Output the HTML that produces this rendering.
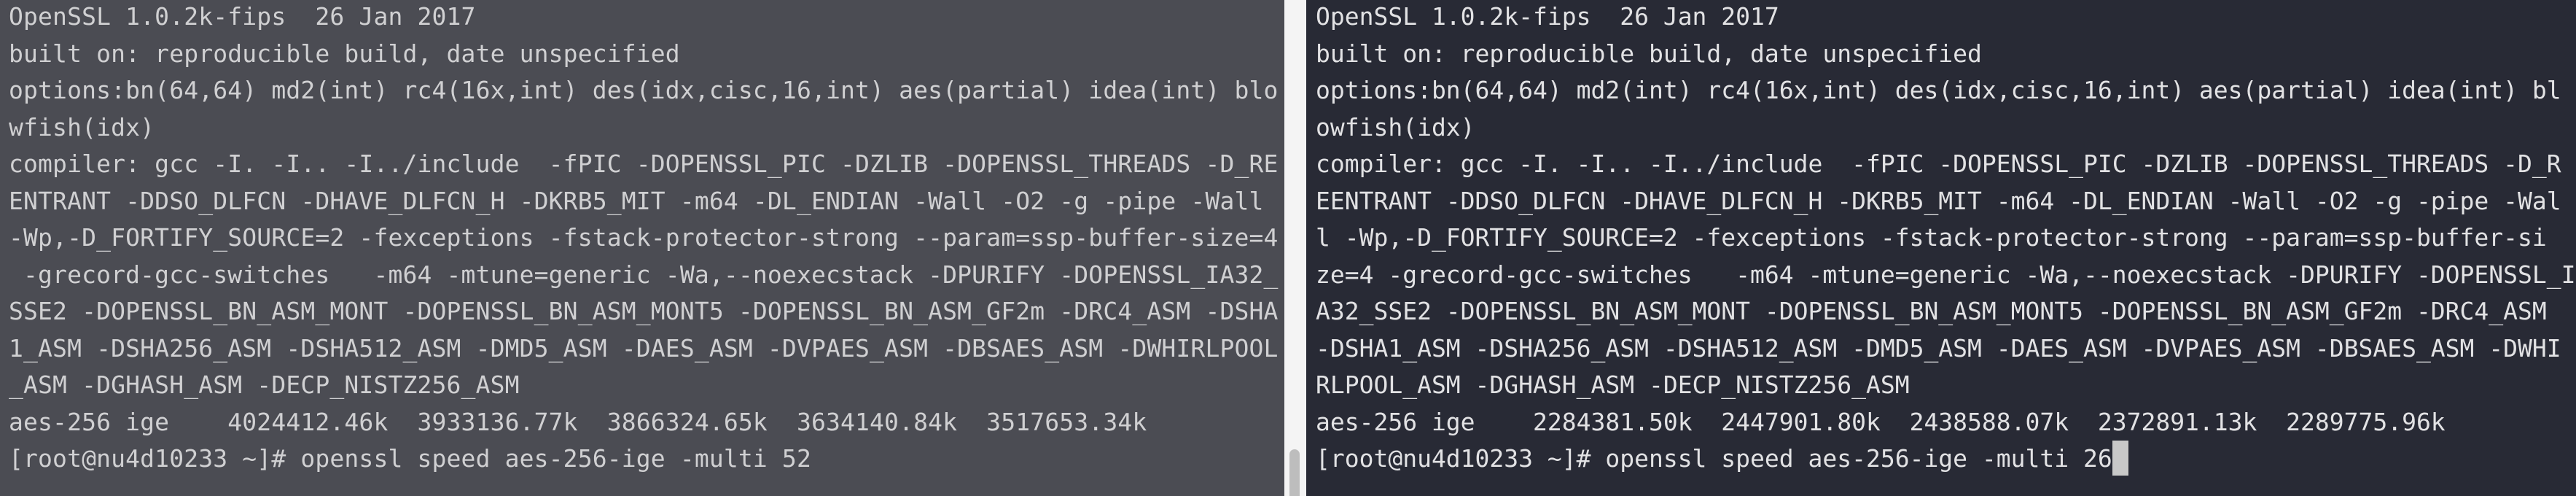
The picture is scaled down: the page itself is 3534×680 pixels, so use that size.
<!DOCTYPE html>
<html><head><meta charset="utf-8"><style>
html,body{margin:0;padding:0;width:3534px;height:680px;overflow:hidden;}
.l{position:absolute;left:0;top:0;width:1762px;height:680px;background:#4b4c53;}
.d{position:absolute;left:1762px;top:0;width:30px;height:680px;background:#f4f4f4;}
.t{position:absolute;left:1769px;top:616px;width:14px;height:64px;background:#bdbdbd;border-radius:7px 7px 0 0;}
.r{position:absolute;left:1792px;top:0;width:1742px;height:680px;background:#282a35;}
pre{position:absolute;margin:0;top:-2px;font-family:"DejaVu Sans Mono","Liberation Mono",monospace;font-size:33px;line-height:50.5px;color:#d6d6d8;letter-spacing:0.15px;white-space:pre;}
.pl{left:12px;color:#d0d0d2;}
.pr{left:1805px;color:#e2e2e4;letter-spacing:0;}
.cur{display:inline-block;width:22px;height:48px;background:#c8c8c8;vertical-align:-12px;}
</style></head><body>
<div class="l"></div><div class="d"></div><div class="t"></div><div class="r"></div>
<pre class="pl">OpenSSL 1.0.2k-fips  26 Jan 2017
built on: reproducible build, date unspecified
options:bn(64,64) md2(int) rc4(16x,int) des(idx,cisc,16,int) aes(partial) idea(int) blo
wfish(idx)
compiler: gcc -I. -I.. -I../include  -fPIC -DOPENSSL_PIC -DZLIB -DOPENSSL_THREADS -D_RE
ENTRANT -DDSO_DLFCN -DHAVE_DLFCN_H -DKRB5_MIT -m64 -DL_ENDIAN -Wall -O2 -g -pipe -Wall
-Wp,-D_FORTIFY_SOURCE=2 -fexceptions -fstack-protector-strong --param=ssp-buffer-size=4
 -grecord-gcc-switches   -m64 -mtune=generic -Wa,--noexecstack -DPURIFY -DOPENSSL_IA32_
SSE2 -DOPENSSL_BN_ASM_MONT -DOPENSSL_BN_ASM_MONT5 -DOPENSSL_BN_ASM_GF2m -DRC4_ASM -DSHA
1_ASM -DSHA256_ASM -DSHA512_ASM -DMD5_ASM -DAES_ASM -DVPAES_ASM -DBSAES_ASM -DWHIRLPOOL
_ASM -DGHASH_ASM -DECP_NISTZ256_ASM
aes-256 ige    4024412.46k  3933136.77k  3866324.65k  3634140.84k  3517653.34k
[root@nu4d10233 ~]# openssl speed aes-256-ige -multi 52</pre>
<pre class="pr">OpenSSL 1.0.2k-fips  26 Jan 2017
built on: reproducible build, date unspecified
options:bn(64,64) md2(int) rc4(16x,int) des(idx,cisc,16,int) aes(partial) idea(int) bl
owfish(idx)
compiler: gcc -I. -I.. -I../include  -fPIC -DOPENSSL_PIC -DZLIB -DOPENSSL_THREADS -D_R
EENTRANT -DDSO_DLFCN -DHAVE_DLFCN_H -DKRB5_MIT -m64 -DL_ENDIAN -Wall -O2 -g -pipe -Wal
l -Wp,-D_FORTIFY_SOURCE=2 -fexceptions -fstack-protector-strong --param=ssp-buffer-si
ze=4 -grecord-gcc-switches   -m64 -mtune=generic -Wa,--noexecstack -DPURIFY -DOPENSSL_I
A32_SSE2 -DOPENSSL_BN_ASM_MONT -DOPENSSL_BN_ASM_MONT5 -DOPENSSL_BN_ASM_GF2m -DRC4_ASM
-DSHA1_ASM -DSHA256_ASM -DSHA512_ASM -DMD5_ASM -DAES_ASM -DVPAES_ASM -DBSAES_ASM -DWHI
RLPOOL_ASM -DGHASH_ASM -DECP_NISTZ256_ASM
aes-256 ige    2284381.50k  2447901.80k  2438588.07k  2372891.13k  2289775.96k
[root@nu4d10233 ~]# openssl speed aes-256-ige -multi 26<span class="cur"></span></pre>
</body></html>
